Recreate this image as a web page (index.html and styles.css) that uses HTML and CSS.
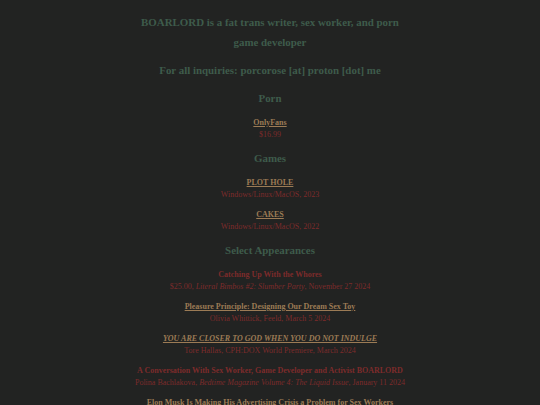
FILE: index.html
```html
<!DOCTYPE html>
<html lang="en">
<head>
<meta charset="utf-8">
<title>BOARLORD</title>
<link rel="stylesheet" href="styles.css">
</head>
<body>
<main class="page">
  <h2 class="heading intro">BOARLORD is a fat trans writer, sex worker, and porn game developer</h2>
  <h2 class="heading">For all inquiries: porcorose [at] proton [dot] me</h2>

  <h2 class="heading">Porn</h2>
  <div class="item">
    <a class="title link" href="#">OnlyFans</a>
    <div class="detail">$16.99</div>
  </div>

  <h2 class="heading">Games</h2>
  <div class="item">
    <a class="title link" href="#">PLOT HOLE</a>
    <div class="detail">Windows/Linux/MacOS, 2023</div>
  </div>
  <div class="item">
    <a class="title link" href="#">CAKES</a>
    <div class="detail">Windows/Linux/MacOS, 2022</div>
  </div>

  <h2 class="heading">Select Appearances</h2>
  <div class="item">
    <div class="title plain">Catching Up With the Whores</div>
    <div class="detail">$25.00, <i>Literal Bimbos #2: Slumber Party</i>, November 27 2024</div>
  </div>
  <div class="item">
    <a class="title link" href="#">Pleasure Principle: Designing Our Dream Sex Toy</a>
    <div class="detail">Olivia Whittick, Feeld, March 5 2024</div>
  </div>
  <div class="item">
    <a class="title link ital" href="#">YOU ARE CLOSER TO GOD WHEN YOU DO NOT INDULGE</a>
    <div class="detail">Tore Hallas, CPH:DOX World Premiere, March 2024</div>
  </div>
  <div class="item">
    <div class="title plain">A Conversation With Sex Worker, Game Developer and Activist BOARLORD</div>
    <div class="detail">Polina Bachlakova, <i>Bedtime Magazine Volume 4: The Liquid Issue</i>, January 11 2024</div>
  </div>
  <div class="item">
    <a class="title link" href="#">Elon Musk Is Making His Advertising Crisis a Problem for Sex Workers</a>
    <div class="detail">Vice, 2023</div>
  </div>
</main>
</body>
</html>
```

FILE: styles.css
```css
html, body {
  margin: 0;
  padding: 0;
  background: #222322;
}

body {
  font-family: "Liberation Serif", "Times New Roman", serif;
  font-size: 8px;
  line-height: 12px;
  color: #7d2b2b;
}

.page {
  width: 276px;
  margin: 0 auto;
  padding-top: 13px;
  text-align: center;
}

.heading {
  font-size: 10.9px;
  line-height: 20px;
  font-weight: bold;
  color: #3e5b4b;
  margin: 7px 0 8px;
}

.intro {
  margin-top: 0;
  line-height: 19.5px;
}

.item {
  padding-top: 1px;
  margin-bottom: 7px;
}

.title {
  display: block;
  font-weight: bold;
}

.link {
  color: #9c7b55;
  text-decoration: underline;
}

.ital {
  font-style: italic;
}

.plain {
  color: #7d2b2b;
}

.detail {
  color: #7d2b2b;
}
```
